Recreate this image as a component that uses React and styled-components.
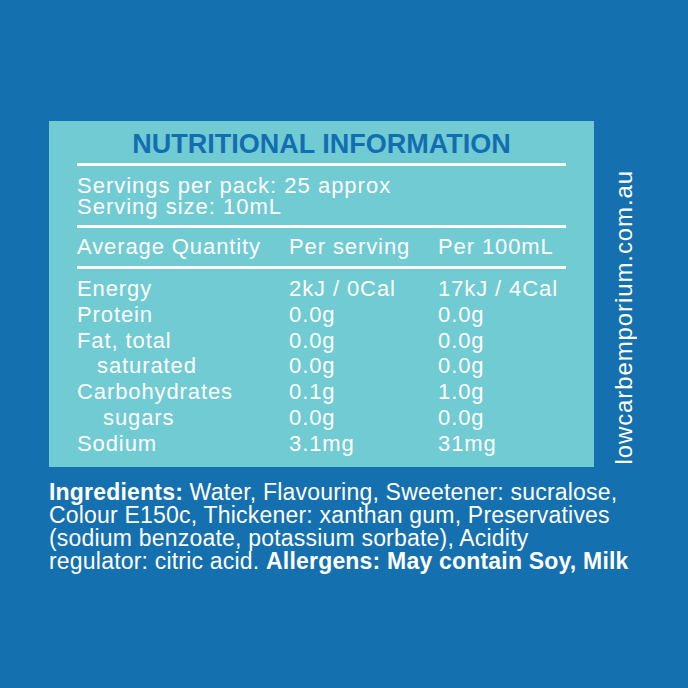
import React from 'react';
import styled, {createGlobalStyle} from 'styled-components';

const GlobalStyle = createGlobalStyle`
	html, body {
		margin: 0;
		padding: 0;
		background: #1570b0;
	}
`;

const rows = [
	{label: 'Energy', serving: '2kJ / 0Cal', per100: '17kJ / 4Cal'},
	{label: 'Protein', serving: '0.0g', per100: '0.0g'},
	{label: 'Fat, total', serving: '0.0g', per100: '0.0g'},
	{label: 'saturated', serving: '0.0g', per100: '0.0g', indent: 20},
	{label: 'Carbohydrates', serving: '0.1g', per100: '1.0g'},
	{label: 'sugars', serving: '0.0g', per100: '0.0g', indent: 26},
	{label: 'Sodium', serving: '3.1mg', per100: '31mg'},
];

const App = () => {
	return (
		<Page>
			<GlobalStyle />
			<Top>
				<Panel>
					<Title>NUTRITIONAL INFORMATION</Title>
					<Rule />
					<Servings>
						Servings per pack: 25 approx<br/>
						Serving size: 10mL
					</Servings>
					<Rule />
					<HeadRow>
						<Cell>Average Quantity</Cell>
						<Cell>Per serving</Cell>
						<Cell>Per 100mL</Cell>
					</HeadRow>
					<Rule />
					<Table>
						{rows.map(r => (
							<Row key={r.label}>
								<Cell indent={r.indent}>{r.label}</Cell>
								<Cell>{r.serving}</Cell>
								<Cell>{r.per100}</Cell>
							</Row>
						))}
					</Table>
				</Panel>
				<Site>lowcarbemporium.com.au</Site>
			</Top>
			<Ingredients>
				<b>Ingredients:</b> Water, Flavouring, Sweetener: sucralose,<br/>
				Colour E150c, Thickener: xanthan gum, Preservatives<br/>
				(sodium benzoate, potassium sorbate), Acidity<br/>
				regulator: citric acid. <b>Allergens: May contain Soy, Milk</b>
			</Ingredients>
		</Page>
	);
};

const Page = styled.div`
	width: 688px;
	height: 688px;
	box-sizing: border-box;
	padding: 121px 0 0 49px;
	font-family: "Liberation Sans", Arial, sans-serif;
	color: #FFFFFF;
	overflow: hidden;
`;

const Top = styled.div`
	display: flex;
	align-items: flex-end;
`;

const Panel = styled.div`
	width: 545px;
	height: 346px;
	box-sizing: border-box;
	background: #71cbd3;
	padding: 8px 28px 0 28px;
`;

const Title = styled.div`
	text-align: center;
	font-size: 27px;
	font-weight: 700;
	letter-spacing: 0px;
	color: #136eb1;
	line-height: 30px;
	margin-bottom: 4px;
`;

const Rule = styled.div`
	height: 3px;
	background: #FFFFFF;
`;

const Servings = styled.div`
	font-size: 22px;
	letter-spacing: 1px;
	line-height: 21px;
	padding: 9px 0 8px;
`;

const HeadRow = styled.div`
	display: grid;
	grid-template-columns: 212px 149px 1fr;
	font-size: 22px;
	letter-spacing: 0.9px;
	line-height: 26px;
	padding: 6px 0 6px;
`;

const Table = styled.div`
	padding-top: 7px;
`;

const Row = styled.div`
	display: grid;
	grid-template-columns: 212px 149px 1fr;
	font-size: 22px;
	letter-spacing: 0.9px;
	line-height: 25.8px;
`;

const Cell = styled.div`
	padding-left: ${props => props.indent || 0}px;
	white-space: nowrap;
`;

const Site = styled.div`
	writing-mode: vertical-rl;
	transform: rotate(180deg);
	font-size: 24px;
	letter-spacing: 0.9px;
	line-height: 24px;
	margin-left: 18px;
	margin-bottom: 2px;
	white-space: nowrap;
`;

const Ingredients = styled.div`
	margin-top: 14px;
	font-size: 23px;
	letter-spacing: 0.2px;
	line-height: 23px;
	white-space: nowrap;

	b {
		font-weight: 700;
	}
`;

export default App;
